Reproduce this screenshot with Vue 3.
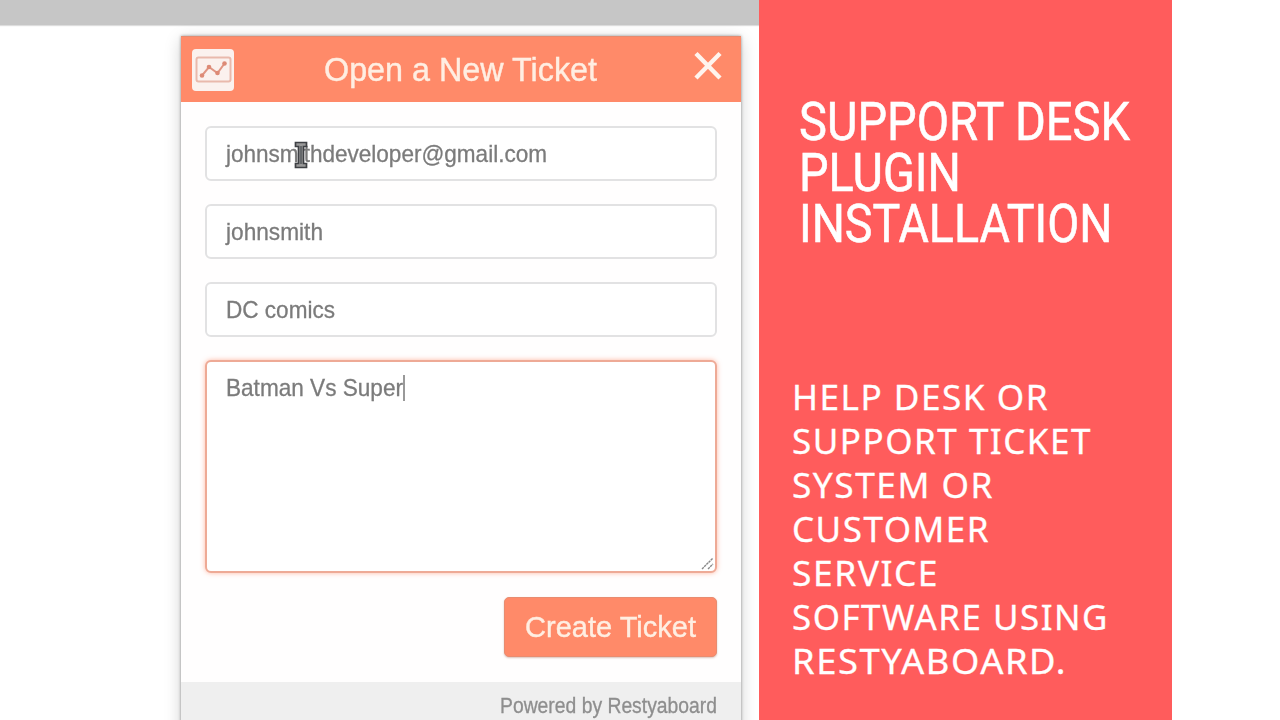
<script setup>
const fields = [
  { text: 'johnsmithdeveloper@gmail.com', width: 321 },
  { text: 'johnsmith', width: 97 },
  { text: 'DC comics', width: 109 },
]
const titleLines = [
  { text: 'SUPPORT DESK', width: 331 },
  { text: 'PLUGIN', width: 162 },
  { text: 'INSTALLATION', width: 313.5 },
]
const bodyLines = [
  { text: 'HELP DESK OR', width: 257 },
  { text: 'SUPPORT TICKET', width: 300 },
  { text: 'SYSTEM OR', width: 202 },
  { text: 'CUSTOMER', width: 198 },
  { text: 'SERVICE', width: 147 },
  { text: 'SOFTWARE USING', width: 317 },
  { text: 'RESTYABOARD.', width: 275 },
]
</script>

<template>
  <main class="page">
    <section class="shot">
      <div class="topbar"></div>
      <div class="widget">
        <header class="head">
          <svg class="chart" width="42" height="42" viewBox="0 0 42 42">
            <rect width="42" height="42" rx="4" fill="#fbf1ee" />
            <rect x="4.5" y="8.5" width="34" height="24" rx="2" fill="none" stroke="#e9b9ac" stroke-width="2" />
            <path d="M10 26.5L17 18L25.500 24L32.500 14.500" fill="none" stroke="#e09583" stroke-width="2" />
            <g fill="#dd8a76">
              <circle cx="10" cy="26.500" r="2.300" /><circle cx="17" cy="18" r="2.300" />
              <circle cx="25.500" cy="24" r="2.300" /><circle cx="32.500" cy="14.500" r="2.300" />
            </g>
          </svg>
          <svg class="head-title" width="274" height="40">
            <text x="0" y="31" textLength="273" lengthAdjust="spacingAndGlyphs">Open a New Ticket</text>
          </svg>
          <svg class="close" width="28" height="28" viewBox="0 0 28 28">
            <path d="M3.500 3L24.500 24.500M24.500 3L3.500 24.500" stroke="#fff4ee" stroke-width="4.400" stroke-linecap="square" />
          </svg>
        </header>
        <div class="form">
          <div v-for="f in fields" :key="f.text" class="field">
            <svg class="value" width="470" height="34">
              <text x="0" y="25" :textLength="f.width" lengthAdjust="spacingAndGlyphs">{{ f.text }}</text>
            </svg>
          </div>
          <div class="field area">
            <svg class="value" width="470" height="34">
              <text x="0" y="25" textLength="177" lengthAdjust="spacingAndGlyphs">Batman Vs Super</text>
              <path d="M178 4V30" stroke="#777" stroke-width="1.500" />
            </svg>
            <svg class="grip" width="13" height="13" viewBox="0 0 13 13">
              <path d="M1 12L12 1M7 12L12 7" stroke="#888" stroke-width="1.400" stroke-dasharray="2.500 .6" />
            </svg>
          </div>
          <div class="create">
            <svg width="172" height="40">
              <text x="0" y="29" textLength="171" lengthAdjust="spacingAndGlyphs">Create Ticket</text>
            </svg>
          </div>
        </div>
        <footer class="foot">
          <svg width="217" height="30">
            <text x="0" y="22" textLength="217" lengthAdjust="spacingAndGlyphs">Powered by Restyaboard</text>
          </svg>
        </footer>
        <svg class="cursor" width="14" height="28" viewBox="0 0 14 28">
          <path d="M1.500 1.500H12.500V5.500H9.500V22.500H12.500V26.500H1.500V22.500H4.500V5.500H1.500Z" fill="#999" stroke="#3f4145" stroke-width="1.700" />
          <path d="M7 5V23" stroke="#55585c" stroke-width="1.500" />
        </svg>
      </div>
    </section>
    <aside class="promo">
      <h1 class="title">
        <svg v-for="l in titleLines" :key="l.text" width="340" height="51">
          <text x="0" y="45" :textLength="l.width" lengthAdjust="spacingAndGlyphs">{{ l.text }}</text>
        </svg>
      </h1>
      <div class="body">
        <svg v-for="l in bodyLines" :key="l.text" width="330" height="44">
          <text x="0" y="35" :textLength="l.width" lengthAdjust="spacingAndGlyphs">{{ l.text }}</text>
        </svg>
      </div>
    </aside>
  </main>
</template>

<style>
body { background: #fff; }
</style>

<style scoped>
.page { display: flex; width: 1280px; height: 720px; overflow: hidden; background: #fff; }
.page * { box-sizing: border-box; }
svg { display: block; overflow: visible; flex-shrink: 0; }
.shot { width: 759px; height: 720px; overflow: hidden; font-family: "Liberation Sans", sans-serif; }
.topbar { height: 25px; background: #c6c6c6; box-shadow: 0 1px 1px #ddd; }
.widget {
  position: relative; width: 560px; height: 700px; margin: 11px 0 0 181px;
  background: #fffefe; box-shadow: 0 0 3px rgba(0, 0, 0, .4), 0 4px 16px rgba(0, 0, 0, .18);
}
.head {
  display: flex; align-items: flex-start; height: 66px; padding: 13px 20px 0 11px;
  background: #ff8a69; border-top: 1px solid #e58b70;
}
.chart { margin-top: -1.5px; filter: blur(.5px); }
.head-title { margin: 0 0 0 90px; fill: #ffeee2; font-size: 33px; filter: blur(.5px); }
.head-title text, .create text { stroke: #ffeee2; stroke-width: .4px; }
.close { margin: 2px 0 0 96px; filter: blur(.5px); }
.form { display: flex; flex-direction: column; height: 580px; padding: 24px 24px 0; }
.field {
  height: 55px; margin-bottom: 23px; padding: 9px 19px; border: 2px solid #e2e2e3;
  border-radius: 6px; background: #fff;
}
.value { fill: #7b7b7b; font-size: 24px; filter: blur(.6px); }
.value text { stroke: #7b7b7b; stroke-width: .3px; }
.area {
  position: relative; height: 213px; border-color: #eeaa96;
  box-shadow: 0 0 5px rgba(255, 138, 105, .6); margin-bottom: 24px;
}
.grip { position: absolute; right: 1px; bottom: 1px; }
.create {
  display: flex; align-self: flex-end; width: 213px; height: 60px; padding: 10px 20px;
  background: #ff8a69; border: 1px solid #e88c70; border-radius: 5px; fill: #ffeee2; font-size: 30px;
  box-shadow: 0 1px 2px rgba(150, 80, 60, .35);
}
.create svg { filter: blur(.5px); }
.foot { display: flex; justify-content: flex-end; height: 60px; padding: 9px 24px; background: #efefef; fill: #8e8e8e; font-size: 21.5px; }
.foot svg { filter: blur(.6px); }
.foot text { stroke: #8e8e8e; stroke-width: .3px; }
.cursor { position: absolute; left: 113px; top: 105px; filter: blur(.5px); }
.promo { width: 413px; height: 720px; padding: 95px 0 0 33px; background: #ff5c5c; fill: #fff; }
.title { margin: 0 0 0 6.5px; font: 400 54px Roboto, sans-serif; }
.title text { stroke: #fff; stroke-width: .6px; }
.body { margin: 127px 0 0 -.5px; font: 400 35px "Noto Sans", sans-serif; letter-spacing: 1.5px; }
.body text { stroke: #fff; stroke-width: .3px; }
</style>
